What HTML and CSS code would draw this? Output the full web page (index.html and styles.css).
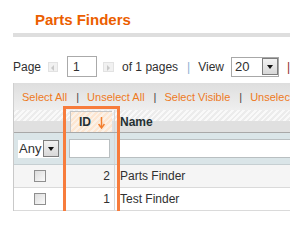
FILE: index.html
```html
<!DOCTYPE html>
<html lang="en">
<head>
    <meta charset="UTF-8">
    <title>Parts Finders</title>
    <link rel="stylesheet" href="styles.css">
</head>
<body>
<div class="page">
    <div class="head">
        <h3>Parts Finders</h3>
    </div>

    <div class="pager">
        <span>Page</span>
        <span class="arrow prev"></span>
        <span class="page-input">1</span>
        <span class="arrow next"></span>
        <span class="of">of 1 pages</span>
        <span class="sep blue">|</span>
        <span>View</span>
        <span class="select view-select"><span class="val">20</span><span class="drop"></span></span>
        <span class="sep red">|</span>
    </div>

    <div class="massaction">
        <a href="#">Select All</a><span class="sep">|</span><a href="#">Unselect All</a><span class="sep">|</span><a href="#">Select Visible</a><span class="sep">|</span><a href="#">Unselect Visible</a>
    </div>

    <div class="grid">
        <div class="row heading">
            <div class="cell"></div>
            <div class="cell id">
                <div class="sort">
                    <span>ID</span>
                    <svg width="7" height="13" viewBox="0 0 7 13">
                        <path d="M3.5 1 V11" stroke="#f27d2c" stroke-width="1.5"/>
                        <path d="M0.5 8 L3.5 12 L6.5 8" fill="none" stroke="#f27d2c" stroke-width="1.5"/>
                    </svg>
                </div>
            </div>
            <div class="cell name">Name</div>
        </div>

        <div class="row filter">
            <div class="cell">
                <span class="select any-select"><span class="val">Any</span><span class="drop"></span></span>
            </div>
            <div class="cell id"><span class="input id-input"></span></div>
            <div class="cell name"><span class="input name-input"></span></div>
        </div>

        <div class="row even">
            <div class="cell check"><span class="checkbox"></span></div>
            <div class="cell id">2</div>
            <div class="cell name">Parts Finder</div>
        </div>
        <div class="row">
            <div class="cell check"><span class="checkbox"></span></div>
            <div class="cell id">1</div>
            <div class="cell name">Test Finder</div>
        </div>
    </div>

    <div class="highlight"></div>
</div>
</body>
</html>
```

FILE: styles.css
```css
body {
    margin: 0;
    overflow: hidden;
    font-family: Arial, "Liberation Sans", sans-serif;
    color: #303030;
}
.page {
    position: relative;
    width: 420px;
    padding-left: 13px;
}

/* title */
.head {
    border-bottom: 4px solid #dedede;
}
.head h3 {
    margin: 0;
    padding: 11px 0 4px 22px;
    font-size: 15px;
    line-height: 18px;
    font-weight: bold;
    color: #eb5e00;
}

/* pager */
.pager {
    display: flex;
    align-items: center;
    height: 46px;
    padding-top: 13px;
    box-sizing: border-box;
    font-size: 12px;
    line-height: 14px;
}
.arrow {
    position: relative;
    width: 10px;
    height: 10px;
    border: 1px solid #e2e2e2;
    background: #f1f1f1;
    box-sizing: border-box;
}
.arrow::after {
    content: "";
    position: absolute;
    top: 2px;
    border-top: 3px solid transparent;
    border-bottom: 3px solid transparent;
}
.prev { margin-left: 7px; }
.prev::after { left: 2px; border-right: 3px solid #c8c8c8; }
.next { margin-left: 6px; width: 11px; }
.next::after { left: 3px; border-left: 3px solid #c8c8c8; }
.page-input {
    margin-left: 9px;
    width: 30px;
    height: 21px;
    border: 1px solid #aaa;
    box-sizing: border-box;
    padding: 3px 0 0 5px;
    background: #fff;
}
.of { margin-left: 8px; }
.sep { margin: 0 8px 0 9px; }
.blue { color: #8bb0d4; }
.red { color: #8c2b2b; margin-left: 8px; }
.select {
    display: flex;
    align-items: center;
    background: #fff;
    box-sizing: border-box;
}
.view-select {
    margin-left: 7px;
    width: 48px;
    height: 20px;
    border: 1px solid #a8a8a8;
    padding-left: 3px;
    font-size: 13px;
}
.select .val { flex: 1; }
.drop {
    position: relative;
    width: 16px;
    height: 17px;
    border: 1px solid #7d7d7d;
    background: linear-gradient(#f2f2f2, #d8d8d8);
    box-sizing: border-box;
}
.drop::after {
    content: "";
    position: absolute;
    left: 4px;
    top: 6px;
    border-left: 3.5px solid transparent;
    border-right: 3.5px solid transparent;
    border-top: 4px solid #111;
}

/* mass action bar */
.massaction {
    height: 27px;
    padding: 2px 0 0 8px;
    box-sizing: border-box;
    border-left: 1px solid #cfcfcf;
    background: linear-gradient(#dedede, #efefef);
    font-size: 11px;
    line-height: 25px;
    white-space: nowrap;
}
.massaction a {
    color: #ee7a1e;
    text-decoration: none;
}
.massaction .sep {
    color: #444;
    margin: 0 8px 0 9px;
}

/* grid */
.grid {
    border-left: 1px solid #c9c9c9;
    font-size: 12px;
    line-height: 14px;
}
.row {
    display: grid;
    grid-template-columns: 52px 49px 1fr;
    height: 23px;
    border-bottom: 1px solid #dadada;
    box-sizing: border-box;
}
.cell {
    display: flex;
    align-items: center;
}
.cell.id {
    border-right: 1px solid #d6d6d6;
    justify-content: flex-end;
    padding-right: 4px;
}
.cell.name { padding-left: 5px; }
.even { background: #f5f5f5; }

.heading {
    border-bottom: 1px solid #a8a8a8;
    background:
        linear-gradient(#e0e0e0, #e0e0e0) bottom / 100% 11px no-repeat,
        repeating-linear-gradient(-45deg, #f9f9f9 0 2px, #ececec 2px 4px);
    font-weight: bold;
    color: #253033;
}
.heading .cell { align-items: flex-end; }
.heading .cell.name { padding-bottom: 3px; }
.heading .cell.id {
    justify-content: flex-start;
    padding: 0 2px 0 4px;
}
.sort {
    display: flex;
    align-items: center;
    justify-content: space-between;
    width: 42px;
    height: 21px;
    padding: 0 7px 0 8px;
    box-sizing: border-box;
    border-top: 1px solid #c6c6c6;
    border-left: 1px solid #c6c6c6;
    background: repeating-linear-gradient(-45deg, #fde6d1 0 2px, #fbf2e9 2px 4px);
}

.filter {
    height: 32px;
    border-bottom-color: #c6cfd2;
    background: #dae5e8;
}
.filter .cell.id {
    justify-content: flex-start;
    padding: 0 0 0 3px;
}
.filter .cell.name { padding-left: 2px; }
.any-select {
    margin-left: 4px;
    width: 41px;
    height: 18px;
    padding-left: 1px;
    font-size: 13px;
}
.input {
    height: 19px;
    border: 1px solid #b9bfc1;
    background: #fff;
    box-sizing: border-box;
}
.id-input { width: 41px; }
.name-input { flex: 1; }

.check { justify-content: center; padding-right: 1px; }
.checkbox {
    width: 12px;
    height: 12px;
    border: 1px solid #8f8f8f;
    background: linear-gradient(135deg, #dcdcdc, #fafafa);
    box-sizing: border-box;
}

/* orange annotation frame */
.highlight {
    position: absolute;
    left: 63px;
    top: 106px;
    width: 57px;
    height: 116px;
    border: 3px solid #f77c3c;
    box-sizing: border-box;
}
```
